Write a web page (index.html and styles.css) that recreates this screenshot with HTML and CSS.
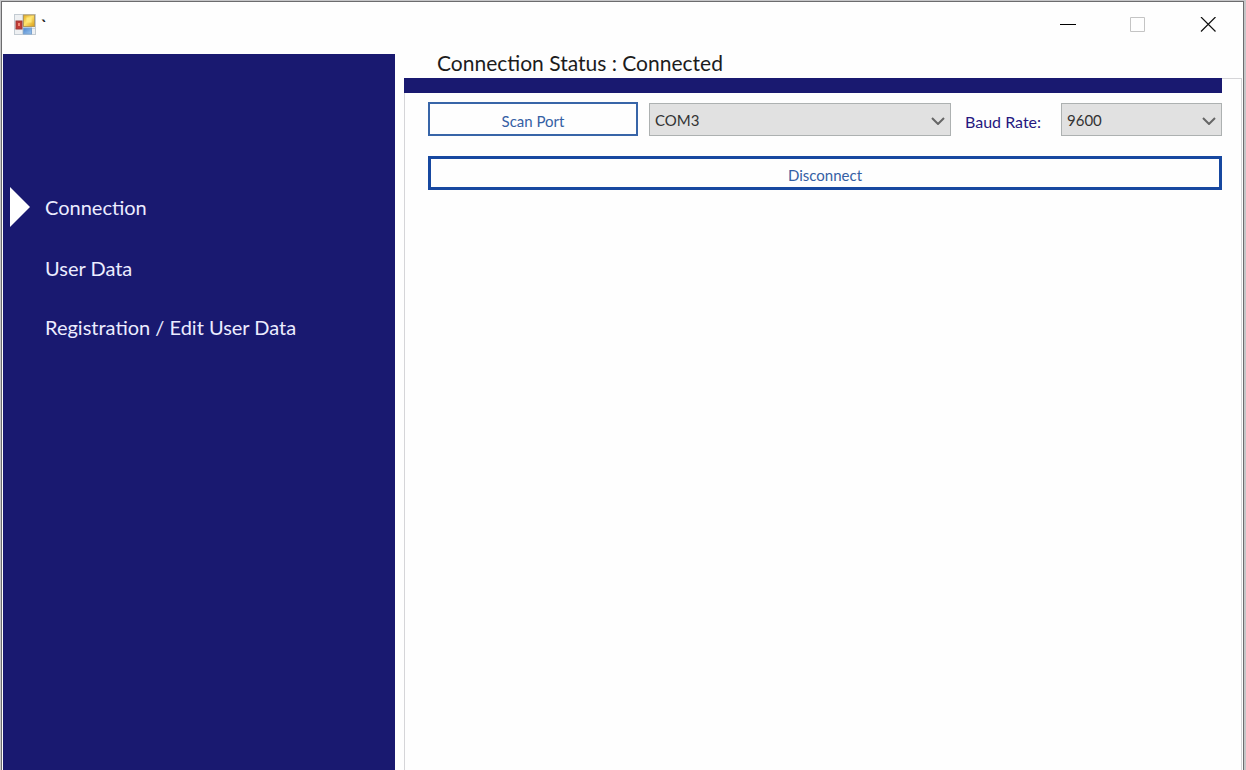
FILE: index.html
```html
<!DOCTYPE html>
<html lang="en">
<head>
<meta charset="utf-8">
<title>Connection</title>
<link rel="stylesheet" href="styles.css">
</head>
<body>
<div class="window">
  <header class="titlebar">
    <svg class="app-icon" viewBox="0 0 22 22" aria-hidden="true">
      <defs>
        <linearGradient id="gold" x1="0" y1="0" x2="1" y2="1"><stop offset="0" stop-color="#e2a91d"/><stop offset=".45" stop-color="#ffe470"/><stop offset="1" stop-color="#d99d14"/></linearGradient>
        <linearGradient id="blue" x1="0" y1="0" x2="1" y2="1"><stop offset="0" stop-color="#4f87cf"/><stop offset="1" stop-color="#9cc6ee"/></linearGradient>
      </defs>
      <rect x=".5" y=".5" width="21" height="20" fill="#eef0f2" stroke="#c3cbd2"/>
      <path d="M8.500 1v19M1 14.500h20" stroke="#cfd6dc"/>
      <rect x="9.500" y="1" width="11" height="11.500" fill="url(#gold)" stroke="#b5995a"/>
      <rect x="12.500" y="3.500" width="5" height="5" fill="#ffe878"/>
      <rect x="2" y="7" width="6" height="8" fill="#c23a34" stroke="#9c3a38"/>
      <rect x="4" y="9" width="2" height="3" fill="#f08a78"/>
      <rect x="9.500" y="14" width="8" height="6" fill="url(#blue)" stroke="#7ba3d0"/>
    </svg>
    <span class="title">`</span>
    <div class="controls">
      <button class="control" type="button" aria-label="Minimize"><svg viewBox="0 0 16 16"><path d="M0 7.500h16" stroke="#000"/></svg></button>
      <button class="control" type="button" aria-label="Maximize" disabled><svg viewBox="0 0 16 16"><path d="M.5.500h14v14H.500z" fill="none" stroke="#c4c4c4"/></svg></button>
      <button class="control" type="button" aria-label="Close"><svg viewBox="0 0 16 16"><path d="M1 0l14.500 14.500M15.500 0L1 14.500" stroke="#111" stroke-width="1.200"/></svg></button>
    </div>
  </header>
  <div class="content">
    <nav class="sidebar">
      <a class="nav-item active" href="#connection">Connection</a>
      <a class="nav-item" href="#user-data">User Data</a>
      <a class="nav-item" href="#registration">Registration / Edit User Data</a>
    </nav>
    <main class="main">
      <h1 class="status">Connection Status : Connected</h1>
      <section class="panel">
        <div class="strip"></div>
        <form class="form">
          <div class="row">
            <button class="button scan" type="button">Scan Port</button>
            <span class="combo port"><select aria-label="Port"><option>COM3</option></select><svg viewBox="0 0 14 8" aria-hidden="true"><path d="M1 1l6 6 6-6"/></svg></span>
            <label class="label" for="baud">Baud Rate:</label>
            <span class="combo baud"><select id="baud"><option>9600</option></select><svg viewBox="0 0 14 8" aria-hidden="true"><path d="M1 1l6 6 6-6"/></svg></span>
          </div>
          <button class="button disconnect" type="button">Disconnect</button>
        </form>
      </section>
    </main>
  </div>
</div>
</body>
</html>
```
FILE: styles.css
```css
* { box-sizing: border-box; }

body {
  margin: 0;
  height: 100vh;
  padding: 1px 2px 0 1px;
  overflow: hidden;
  background: #c6c6c8;
  font-family: Futura, Lato, sans-serif;
}

button, select { font-family: inherit; }

.window {
  display: flex;
  flex-direction: column;
  height: 100%;
  border: 1px solid #6c6c6e;
  border-bottom: 0;
  background: #fefefe;
}

.titlebar {
  display: flex;
  align-items: center;
  height: 45px;
  padding-left: 12px;
}

.app-icon { width: 22px; height: 22px; }

.title {
  margin-left: 5px;
  font-size: 16px;
  font-weight: 700;
  color: #222;
}

.controls { display: flex; margin-left: auto; }

.control {
  display: flex;
  align-items: center;
  justify-content: center;
  width: 70px;
  height: 45px;
  padding: 0;
  border: 0;
  background: none;
}

.control svg { width: 16px; height: 16px; }

.content {
  display: flex;
  flex: 1;
  gap: 9px;
  min-height: 0;
  padding-left: 1px;
}

.sidebar {
  display: flex;
  flex-direction: column;
  gap: 19px;
  width: 392px;
  margin-top: 7px;
  padding-top: 133px;
  background: #191970;
}

.nav-item {
  display: flex;
  align-items: center;
  height: 40px;
  padding: 3px 0 0 42px;
  color: #ececff;
  font-size: 20px;
  line-height: 24px;
  text-decoration: none;
}

.active { padding: 0 0 0 7px; }

.active::before {
  content: "";
  margin-right: 15px;
  border: 20px solid transparent;
  border-right: 0;
  border-left-color: #fff;
}

.main {
  display: flex;
  flex: 1;
  flex-direction: column;
  min-width: 0;
}

.status {
  margin: 0;
  padding: 2px 0 2px 33px;
  color: #1c1c1c;
  font-size: 21px;
  font-weight: 400;
  line-height: 27px;
}

.panel {
  flex: 1;
  margin-right: 1px;
  border: 1px solid #d5d5d8;
  border-bottom: 0;
}

.strip {
  height: 15px;
  margin: -1px 19px 0 -1px;
  background: #191970;
}

.form { padding: 9px 19px 0 23px; }

.row {
  display: flex;
  align-items: flex-end;
  margin-bottom: 20px;
}

.button {
  height: 34px;
  padding: 4px 0 0;
  border: 2px solid #3865a8;
  background: #fefefe;
  color: #3560a4;
  font-size: 15px;
}

.scan { width: 210px; margin-right: 11px; }

.disconnect {
  display: block;
  width: 100%;
  border: 3px solid #1748a0;
}

.combo {
  display: flex;
  position: relative;
  height: 33px;
}

.combo select {
  width: 100%;
  padding: 0 32px 0 5px;
  appearance: none;
  border: 1px solid #adb1b1;
  border-radius: 0;
  background: #e1e1e1;
  color: #333;
  font-size: 15px;
}

.combo svg {
  position: absolute;
  top: 14px;
  right: 6px;
  width: 14px;
  height: 8px;
  fill: none;
  stroke: #666;
  stroke-width: 2;
  pointer-events: none;
}

.port { flex: 1; }
.baud { width: 161px; }

.label {
  width: 110px;
  padding-left: 14px;
  color: #26187f;
  font-size: 16px;
  line-height: 28px;
}
```
